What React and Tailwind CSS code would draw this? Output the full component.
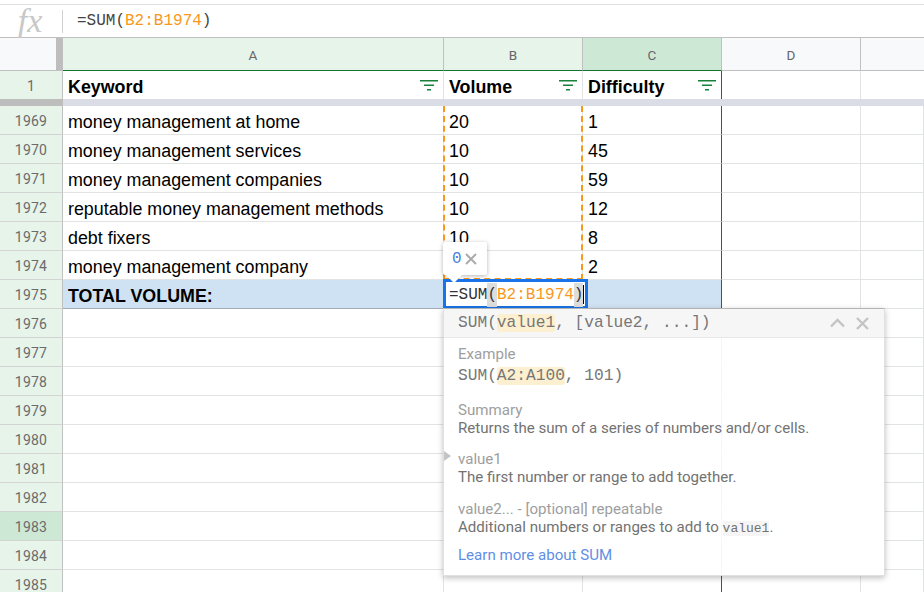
import React from "react";

const MONO = "font-['Liberation_Mono',monospace]";
const SANS = "font-['Liberation_Sans',Arial,sans-serif]";
const ROBOTO = "font-['Roboto',sans-serif]";

const dataRows = [
  { n: 1969, a: "money management at home", b: "20", c: "1" },
  { n: 1970, a: "money management services", b: "10", c: "45" },
  { n: 1971, a: "money management companies", b: "10", c: "59" },
  { n: 1972, a: "reputable money management methods", b: "10", c: "12" },
  { n: 1973, a: "debt fixers", b: "10", c: "8" },
  { n: 1974, a: "money management company", b: "", c: "2" },
];

const emptyRows = [1976, 1977, 1978, 1979, 1980, 1981, 1982, 1983, 1984, 1985];

// Little three-bar filter icon in the header row
const FilterIcon = () => (
  <svg width="18" height="11" viewBox="0 0 18 11" className="shrink-0">
    <rect x="0" y="0" width="18" height="1.5" fill="#188038" />
    <rect x="4" y="4.5" width="10" height="1.5" fill="#188038" />
    <rect x="7" y="9" width="4" height="1.5" fill="#188038" />
  </svg>
);

const RowHeader = ({ n, dark }) => (
  <div
    className={`w-[63px] shrink-0 h-full flex items-center justify-center pt-[2px] border-r border-b border-r-[#c0c0c0] border-b-[#d4d4d4] text-[14px] tracking-[0.2px] text-[#6b6b6b] ${ROBOTO} ${
      dark ? "bg-[#cee8d6]" : "bg-[#e7f4ea]"
    }`}
  >
    {n}
  </div>
);

const Cell = ({ w, children, className = "" }) => (
  <div
    className={`${w} shrink-0 h-full flex items-center px-[5px] pt-[4px] border-r border-b border-[#e2e3e3] text-[17.85px] text-black ${SANS} ${className}`}
  >
    {children}
  </div>
);

const Row = ({ n, a, b, c, dark }) => (
  <div className="flex h-[29px]">
    <RowHeader n={n} dark={dark} />
    <Cell w="w-[381px]">{a}</Cell>
    <Cell w="w-[139px]">{b}</Cell>
    <Cell w="w-[139px]" className="border-r-[#137333]">
      {c}
    </Cell>
    <Cell w="w-[139px]" />
    <Cell w="flex-1" />
  </div>
);

const ColHeader = ({ w, bg, children }) => (
  <div
    className={`${w} h-full flex items-center justify-center pt-[2px] border-r border-r-[#c0c0c0] border-b border-b-[#137333] text-[13.5px] text-[#666] ${ROBOTO} ${bg}`}
  >
    {children}
  </div>
);

const FilterCell = ({ w, children, className = "" }) => (
  <div
    className={`${w} shrink-0 h-full flex items-center justify-between pl-[5px] pr-[5px] border-r border-[#e2e3e3] text-[17.85px] font-bold text-black ${SANS} ${className}`}
  >
    <span className="pt-[4px]">{children}</span>
    <FilterIcon />
  </div>
);

const Mark = ({ children }) => (
  <span className="bg-[#fdf0d0] rounded-[3px]">{children}</span>
);

const Label = ({ children, className = "" }) => (
  <div className={`text-[15.08px] leading-[18px] text-[#9e9e9e] ${className}`}>{children}</div>
);

const Desc = ({ children }) => (
  <div className="text-[15.08px] leading-[18px] text-[#727272]">{children}</div>
);

export default function App() {
  return (
    <div className="relative w-[924px] h-[592px] overflow-hidden bg-white">
      {/* Formula bar */}
      <div className="mt-[4px] h-[34px] flex items-center border-t border-b border-t-[#e0e0e0] border-b-[#c0c0c0]">
        <div className="w-[62px] h-full flex items-center justify-center pr-[2px]">
          <span className="font-['Liberation_Serif',serif] italic text-[34px] text-[#c8c8c8] leading-none">fx</span>
        </div>
        <div className="w-px h-[23px] bg-[#d0d0d0]" />
        <div className={`pl-[14px] text-[16px] text-[#444] ${MONO}`}>
          =SUM(<span className="text-[#f7981d]">B2:B1974</span>)
        </div>
      </div>

      {/* Column headers */}
      <div className="flex h-[33px]">
        <div className="w-[63px] shrink-0 h-full flex justify-end bg-[#f8f9fa] border-r border-b border-[#c0c0c0]">
          <div className="w-[6px] h-full bg-[#bdbdbd]" />
        </div>
        <ColHeader w="w-[381px]" bg="bg-[#e7f4ea]">A</ColHeader>
        <ColHeader w="w-[139px]" bg="bg-[#e7f4ea]">B</ColHeader>
        <ColHeader w="w-[139px]" bg="bg-[#cee8d6]">C</ColHeader>
        <div className={`w-[139px] h-full flex items-center justify-center pt-[2px] border-r border-b border-[#c0c0c0] text-[13.5px] text-[#666] bg-[#f8f9fa] ${ROBOTO}`}>
          D
        </div>
        <div className="flex-1 h-full bg-[#f8f9fa] border-b border-[#c0c0c0]" />
      </div>

      {/* Frozen row 1 */}
      <div className="flex h-[28px]">
        <div className={`w-[63px] shrink-0 h-full flex items-center justify-center pt-[2px] border-r border-[#c0c0c0] text-[14px] text-[#6b6b6b] bg-[#e7f4ea] ${ROBOTO}`}>
          1
        </div>
        <FilterCell w="w-[381px]">Keyword</FilterCell>
        <FilterCell w="w-[139px]">Volume</FilterCell>
        <FilterCell w="w-[139px]" className="border-r-[#137333]">Difficulty</FilterCell>
        <div className="w-[139px] h-full border-r border-[#e2e3e3]" />
      </div>

      {/* Freeze divider */}
      <div className="flex h-[7px]">
        <div className="w-[63px] bg-[#bdbdbd]" />
        <div className="flex-1 bg-[#dadce6]" />
      </div>

      {dataRows.map((r) => (
        <Row key={r.n} {...r} />
      ))}

      {/* Total row */}
      <div className="flex h-[29px]">
        <RowHeader n={1975} />
        <Cell w="w-[381px]" className="bg-[#cfe2f3] font-bold border-r-[#cfe2f3] border-b-[#a3acb5]">
          TOTAL VOLUME:
        </Cell>
        <Cell w="w-[139px]" className="bg-[#cfe2f3] border-r-[#cfe2f3] border-b-[#a3acb5]" />
        <Cell w="w-[139px]" className="bg-[#cfe2f3] border-r-[#137333] border-b-[#a3acb5]" />
        <Cell w="w-[139px]" />
        <Cell w="flex-1" />
      </div>

      {emptyRows.map((n) => (
        <Row key={n} n={n} dark={n === 1983} c="" a="" b="" />
      ))}

      {/* Dashed copy-range outline */}
      <div className="absolute left-[443px] top-[106px] w-[140px] h-[174px] border-2 border-t-0 border-dashed border-[#f7981d]" />

      {/* Active cell editor */}
      <div className={`absolute left-[443px] top-[279px] w-[145px] h-[30px] bg-white border-[3px] border-[#1a73e8] flex items-center pl-[3px] pt-[1px] text-[16px] text-[#333] ${MONO}`}>
        =SUM<span className="bg-[#ddd]">(</span>
        <span className="text-[#f7981d]">B2:B1974</span>
        <span className="bg-[#ddd]">)</span>
        <span className="w-px h-[19px] bg-black" />
      </div>

      {/* Value preview tooltip */}
      <div className="absolute left-[443px] top-[242px] w-[44px] h-[33px] bg-white rounded-[2px] shadow-[0_1px_4px_rgba(0,0,0,0.3)] flex items-center pl-[9px] gap-[3px]">
        <span className={`text-[16px] text-[#4a7fe0] ${MONO}`}>0</span>
        <svg width="12" height="12" viewBox="0 0 12 12">
          <path d="M1 1L11 11M11 1L1 11" stroke="#aaa" strokeWidth="2" />
        </svg>
        <div className="absolute left-[3px] top-[33px] w-0 h-0 border-l-[8px] border-r-[8px] border-t-[8px] border-l-transparent border-r-transparent border-t-white" />
      </div>

      {/* Function help popover */}
      <div className={`absolute left-[443px] top-[308px] w-[442px] h-[268px] bg-white/95 border border-[#e0e0e0] border-t-[#b4b4b4] shadow-[0_2px_6px_rgba(0,0,0,0.25)] ${ROBOTO}`}>
        <div className="h-[29px] flex items-center justify-between pl-[14px] pr-[15px] bg-[#f5f5f5]/95 border-b border-[#e8e8e8]">
          <span className={`text-[16.2px] text-[#777] ${MONO}`}>
            SUM(<Mark>value1</Mark>, [value2, ...])
          </span>
          <div className="flex items-center gap-[11px]">
            <svg width="15" height="10" viewBox="0 0 15 10">
              <path d="M1 8.5L7.5 2L14 8.5" fill="none" stroke="#c4c4c4" strokeWidth="2.4" />
            </svg>
            <svg width="13" height="13" viewBox="0 0 13 13">
              <path d="M1 1L12 12M12 1L1 12" stroke="#c4c4c4" strokeWidth="2.4" />
            </svg>
          </div>
        </div>
        <div className="relative pl-[14px] pt-[7px]">
          <Label>Example</Label>
          <div className={`mt-[3px] h-[21px] text-[16.2px] leading-[21px] text-[#777] ${MONO}`}>
            SUM(<Mark>A2:A100</Mark>, 101)
          </div>
          <Label className="mt-[14px]">Summary</Label>
          <Desc>Returns the sum of a series of numbers and/or cells.</Desc>
          <Label className="mt-[13px]">value1</Label>
          <Desc>The first number or range to add together.</Desc>
          <Label className="mt-[14px]">value2... - [optional] repeatable</Label>
          <Desc>
            Additional numbers or ranges to add to{" "}
            <span className={`bg-[#f5f5f5] text-[13px] ${MONO}`}>value1</span>.
          </Desc>
          <div className="mt-[8px] text-[15.08px] leading-[18px] text-[#5f8fe3]">Learn more about SUM</div>
          <div className="absolute left-0 top-[113px] w-0 h-0 border-t-[5px] border-b-[5px] border-l-[7px] border-t-transparent border-b-transparent border-l-[#c4c4c4]" />
        </div>
      </div>
    </div>
  );
}
